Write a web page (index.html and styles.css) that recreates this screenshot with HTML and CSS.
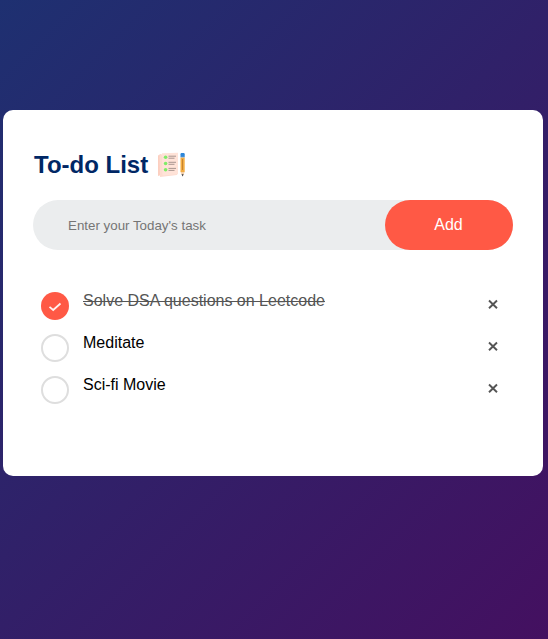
FILE: index.html
```html
<!DOCTYPE html>
<html lang="en">
<head>
<meta charset="utf-8">
<title>To-do List</title>
<link rel="stylesheet" href="styles.css">
</head>
<body>
<main class="card">
  <h2 class="title">To-do List
    <svg class="title-icon" viewBox="0 0 30 26" aria-hidden="true">
      <path fill="#fccfc0" d="M1 3.500 4 2v21l-3 1z"/>
      <path fill="#fddcd0" d="M2.500 2.500 20 1v22L3 25z"/>
      <path fill="#ffe3d8" d="M5 1.300 21 .8v21.400L5.500 23.500z"/>
      <g fill="#80ec68"><circle cx="8.600" cy="5.200" r="1.800"/><circle cx="8.600" cy="11.500" r="1.800"/><circle cx="8.600" cy="17.700" r="1.800"/></g>
      <path stroke="#93827e" stroke-width=".8" d="M11.500 4.200h7.500M11.500 6.200h6M11.500 10.300h7.500M11.500 12.300h6M11.500 16.400h7.500M11.500 18.400h6"/>
      <path fill="#2d86d9" d="M23.500 2.200q0-1.200 1-1.200h2.200q1 0 1 1.200V5h-4.200z"/>
      <path fill="#a8b4bb" d="M23.500 4.800h4.200v1h-4.200z"/>
      <path fill="#f3ad42" d="M23.500 5.800h4.200V20h-4.200z"/>
      <path fill="#bc792b" d="M25.200 7h.8v11h-.8z"/>
      <path fill="#f4cfaa" d="M23.500 20h4.200l-2.100 4.500z"/>
      <path fill="#373c43" d="M24.500 22.200h2.200l-1.100 2.300z"/>
    </svg>
  </h2>
  <form class="row">
    <input class="task-input" type="text" placeholder="Enter your Today's task">
    <button class="add" type="button">Add</button>
  </form>
  <ul class="tasks">
    <li class="task task-done">
      <svg class="mark" viewBox="0 0 28 28"><circle cx="14" cy="14" r="14" fill="#ff5945"/><path d="m8.500 14.800 3.700 3.200 7.300-6.500" fill="none" stroke="#fff3f0" stroke-width="1.700"/></svg>
      <span class="label">Solve DSA questions on Leetcode</span>
      <svg class="close" viewBox="0 0 10 10"><path d="m1 .5 8 7.700M9 .5 1 8.200"/></svg>
    </li>
    <li class="task">
      <svg class="mark" viewBox="0 0 28 28"><circle cx="14" cy="14" r="13" fill="#fff" stroke="#dedede" stroke-width="2"/></svg>
      <span class="label">Meditate</span>
      <svg class="close" viewBox="0 0 10 10"><path d="m1 .5 8 7.700M9 .5 1 8.200"/></svg>
    </li>
    <li class="task">
      <svg class="mark" viewBox="0 0 28 28"><circle cx="14" cy="14" r="13" fill="#fff" stroke="#dedede" stroke-width="2"/></svg>
      <span class="label">Sci-fi Movie</span>
      <svg class="close" viewBox="0 0 10 10"><path d="m1 .5 8 7.700M9 .5 1 8.200"/></svg>
    </li>
  </ul>
</main>
</body>
</html>
```
FILE: styles.css
```css
* {
  box-sizing: border-box;
  margin: 0;
  padding: 0;
}

body {
  min-height: 100vh;
  overflow: hidden;
  padding: 110px 5px 0 3px;
  font-family: "Liberation Sans", Arial, sans-serif;
  background: linear-gradient(135deg, #1e3071, #441060);
}

.card {
  width: 540px;
  height: 366px;
  padding: 40px 30px 70px;
  border-radius: 10px;
  background: #fff;
}

.title {
  display: flex;
  align-items: center;
  gap: 9px;
  height: 30px;
  margin: 0 0 20px 1px;
  color: #002765;
  font-size: 24px;
  line-height: 30px;
}

.title-icon {
  width: 30px;
  height: 26px;
}

.row {
  display: flex;
  height: 50px;
  margin-bottom: 37px;
  border-radius: 30px;
  background: #ebedee;
}

.task-input {
  flex: 1;
  min-width: 0;
  padding: 1px 0 0 35px;
  border: 0;
  outline: 0;
  background: transparent;
  font: 13.333px "Liberation Sans", Arial, sans-serif;
}

.task-input::placeholder {
  color: #757575;
}

.add {
  width: 128px;
  padding-right: 1px;
  border: 0;
  border-radius: 40px;
  background: #ff5945;
  color: #fff;
  font: 16px "Liberation Sans", Arial, sans-serif;
}

.tasks {
  list-style: none;
}

.task {
  display: flex;
  align-items: flex-start;
  height: 42px;
  padding: 5px 15px 0 8px;
  font-size: 16px;
}

.mark {
  width: 28px;
  height: 28px;
  margin-right: 14px;
}

.label {
  flex: 1;
  line-height: 18px;
}

.task-done .label {
  color: #555;
  text-decoration: line-through;
}

.close {
  width: 10px;
  height: 10px;
  margin-top: 8px;
  overflow: visible;
  fill: none;
  stroke: #555;
  stroke-width: 1.900;
}
```
